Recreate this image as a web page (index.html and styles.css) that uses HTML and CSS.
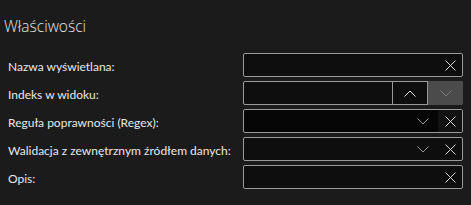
FILE: index.html
```html
<!DOCTYPE html>
<html lang="pl">
<head>
<meta charset="utf-8">
<link rel="stylesheet" href="styles.css">
</head>
<body>
<div class="panel">
  <h1 class="title">Właściwości</h1>
  <div class="form">
    <div class="label">Nazwa wyświetlana:</div>
    <div class="field">
      <span class="input"></span>
      <span class="btn clear"><svg width="11" height="11" viewBox="0 0 11 11"><path d="M0.5 0.5L10.5 10.5M10.5 0.5L0.5 10.5" stroke="#d8d8d8" stroke-width="1" fill="none"/></svg></span>
    </div>

    <div class="label">Indeks w widoku:</div>
    <div class="field">
      <span class="input"></span>
      <span class="btn spin up"><svg width="12" height="7" viewBox="0 0 12 7"><path d="M0.5 6.5L6 1L11.5 6.5" stroke="#e0e0e0" stroke-width="1" fill="none"/></svg></span>
      <span class="btn spin down"><svg width="12" height="7" viewBox="0 0 12 7"><path d="M0.5 0.5L6 6L11.5 0.5" stroke="#7a7a7a" stroke-width="1" fill="none"/></svg></span>
    </div>

    <div class="label">Reguła poprawności (Regex):</div>
    <div class="field dark">
      <span class="input"></span>
      <span class="btn drop"><svg width="12" height="7" viewBox="0 0 12 7"><path d="M0.5 0.5L6 6L11.5 0.5" stroke="#969696" stroke-width="1" fill="none"/></svg></span>
      <span class="btn clear"><svg width="11" height="11" viewBox="0 0 11 11"><path d="M0.5 0.5L10.5 10.5M10.5 0.5L0.5 10.5" stroke="#d8d8d8" stroke-width="1" fill="none"/></svg></span>
    </div>

    <div class="label">Walidacja z zewnętrznym źródłem danych:</div>
    <div class="field">
      <span class="input"></span>
      <span class="btn drop"><svg width="12" height="7" viewBox="0 0 12 7"><path d="M0.5 0.5L6 6L11.5 0.5" stroke="#969696" stroke-width="1" fill="none"/></svg></span>
      <span class="btn clear"><svg width="11" height="11" viewBox="0 0 11 11"><path d="M0.5 0.5L10.5 10.5M10.5 0.5L0.5 10.5" stroke="#d8d8d8" stroke-width="1" fill="none"/></svg></span>
    </div>

    <div class="label">Opis:</div>
    <div class="field">
      <span class="input"></span>
      <span class="btn clear"><svg width="11" height="11" viewBox="0 0 11 11"><path d="M0.5 0.5L10.5 10.5M10.5 0.5L0.5 10.5" stroke="#d8d8d8" stroke-width="1" fill="none"/></svg></span>
    </div>
  </div>
</div>
</body>
</html>
```

FILE: styles.css
```css
html, body {
  margin: 0;
  padding: 0;
  background: #1b1b1b;
  height: 100%;
}
body {
  font-family: Lato, "Noto Sans", sans-serif;
  color: #e6e6e6;
}
.panel {
  padding: 0 8px 0 0;
}
.title {
  margin: 0;
  padding: 0 0 0 4px;
  height: 39px;
  box-sizing: border-box;
  font-family: "Open Sans", "Noto Sans", sans-serif;
  font-size: 15.5px;
  font-weight: 300;
  line-height: 52px;
  color: #e4e4e4;
}
.form {
  display: grid;
  grid-template-columns: 1fr 220px;
  grid-auto-rows: 24px;
  row-gap: 4px;
  padding-left: 8px;
  margin-top: 14px;
}
.label {
  display: flex;
  align-items: center;
  font-size: 12px;
  padding-top: 2px;
  color: #e8e8e8;
  white-space: nowrap;
}
.field {
  display: flex;
  border: 1px solid #9a9a9a;
  border-radius: 2px;
  background: #0e0e0e;
  box-sizing: border-box;
  height: 24px;
}
.input {
  flex: 1;
}
.btn {
  display: flex;
  align-items: center;
  justify-content: center;
}
.clear {
  width: 24px;
}
.drop {
  width: 30px;
}
.spin {
  width: 34px;
}
.up {
  border-left: 1px solid #9a9a9a;
}
.down {
  background: #4b4b4b;
  margin: -1px -1px -1px 0;
  width: 35px;
  border-left: 1px solid #9a9a9a;
  border-radius: 0 2px 2px 0;
}
.dark {
  background: #060606;
}
.dark .clear {
  background: #121212;
  border-radius: 0 1px 1px 0;
}
```
